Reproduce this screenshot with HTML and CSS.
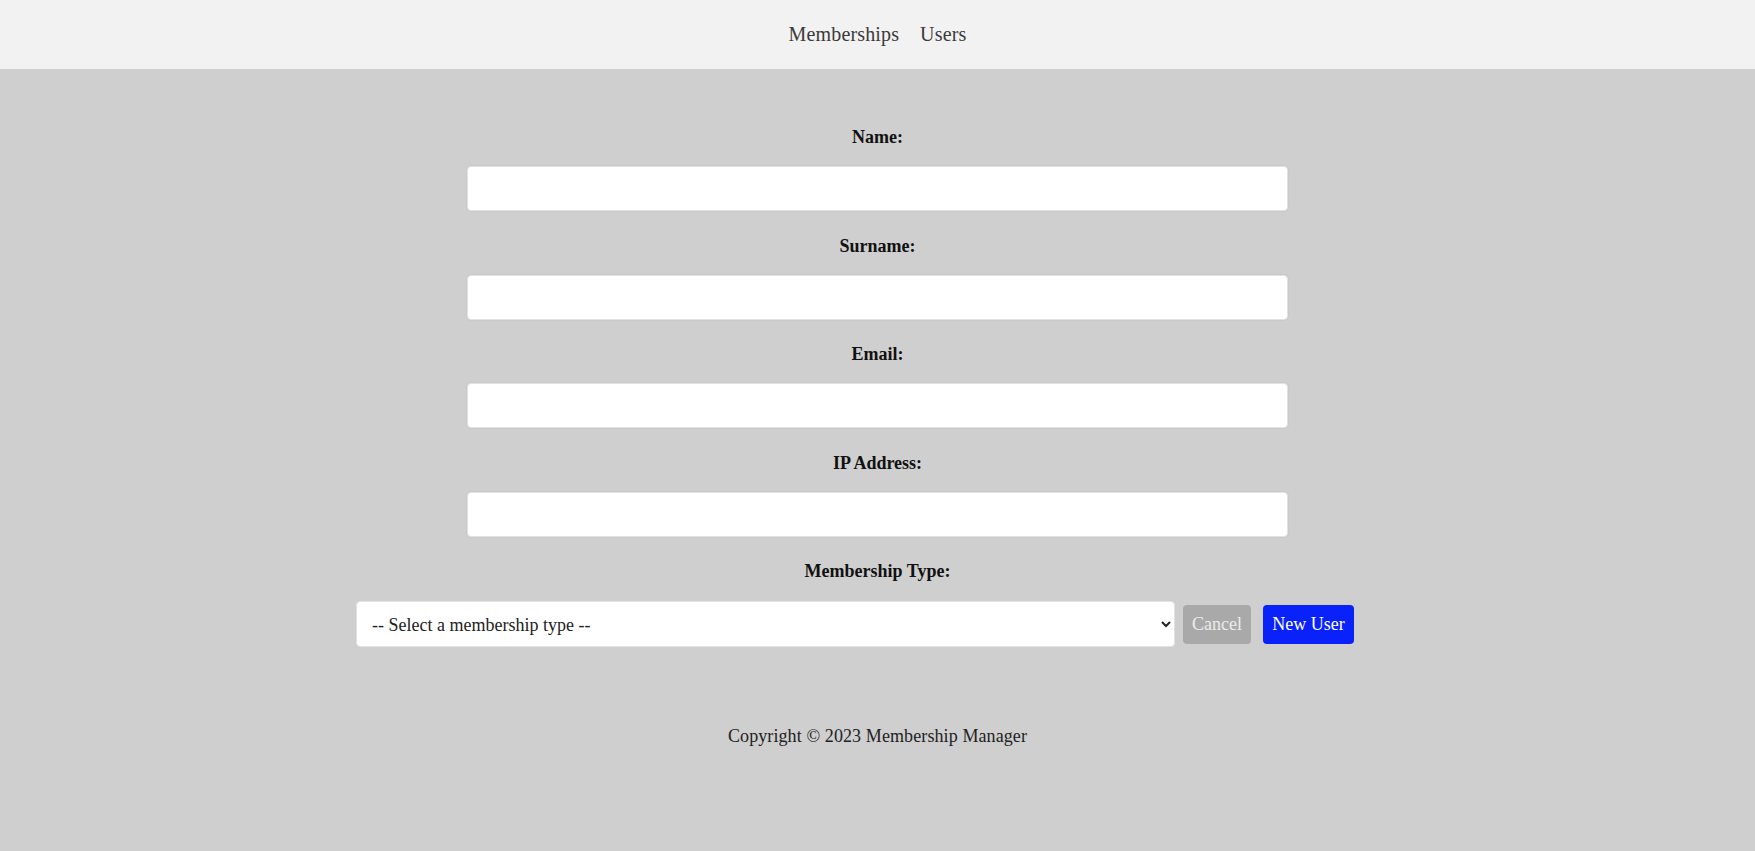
FILE: index.html
```html
<!DOCTYPE html>
<html lang="en">
<head>
<meta charset="utf-8">
<title>Membership Manager</title>
<link rel="stylesheet" href="styles.css">
</head>
<body>
<nav class="topnav">
  <a class="nav-link" href="#">Memberships</a>
  <a class="nav-link" href="#">Users</a>
</nav>
<main class="content">
  <form class="user-form">
    <label class="field-label" for="name">Name:</label>
    <input class="field-input" id="name" type="text">
    <label class="field-label" for="surname">Surname:</label>
    <input class="field-input" id="surname" type="text">
    <label class="field-label" for="email">Email:</label>
    <input class="field-input" id="email" type="text">
    <label class="field-label" for="ip">IP Address:</label>
    <input class="field-input" id="ip" type="text">
    <label class="field-label" for="type">Membership Type:</label>
    <div class="action-row">
      <select class="field-select" id="type">
        <option>-- Select a membership type --</option>
      </select>
      <button class="btn btn-cancel" type="button">Cancel</button>
      <button class="btn btn-primary" type="button">New User</button>
    </div>
  </form>
  <footer class="footer">Copyright © 2023 Membership Manager</footer>
</main>
</body>
</html>
```

FILE: styles.css
```css
html, body {
  margin: 0;
  padding: 0;
}
body {
  background: #cfcfcf;
  font-family: "Liberation Serif", "Times New Roman", serif;
  color: #111;
  min-height: 851px;
}
.topnav {
  height: 69px;
  background: #f2f2f2;
  display: flex;
  justify-content: center;
  align-items: center;
  gap: 21px;
}
.nav-link {
  font-size: 20px;
  color: #3a3a3a;
  text-decoration: none;
  line-height: 23px;
  letter-spacing: 0.15px;
}
.content {
  padding-top: 57px;
}
.user-form {
  display: flex;
  flex-direction: column;
  align-items: center;
}
.field-label {
  font-size: 18px;
  font-weight: bold;
  line-height: 23px;
  margin-bottom: 17px;
  color: #111;
}
.field-input {
  box-sizing: border-box;
  width: 821px;
  height: 45px;
  margin: 0 0 23.6px 0;
  background: #fff;
  border: 1px solid #e2e2e2;
  border-radius: 4px;
  box-shadow: 0 0 2px rgba(0, 0, 0, 0.08);
  font-family: inherit;
  font-size: 18px;
  padding: 0 14px;
}
.action-row {
  display: flex;
  align-items: center;
  padding-right: 45px;
  margin-top: 1px;
}
.field-select {
  box-sizing: border-box;
  width: 819px;
  height: 46px;
  background: #fff;
  border: 1px solid #e2e2e2;
  border-radius: 4px;
  font-family: inherit;
  font-size: 18px;
  color: #222;
  padding: 1px 10px 0 11px;
  margin-right: 8px;
}
.btn {
  box-sizing: border-box;
  height: 39px;
  border: none;
  border-radius: 4px;
  font-family: inherit;
  font-size: 18px;
  padding: 1px 8px 0 8px;
  color: #fff;
}
.btn-cancel {
  width: 68px;
  background: #a9a9a9;
  color: #ececec;
  margin-right: 12px;
}
.btn-primary {
  width: 91px;
  background: #0a22fa;
}
.footer {
  margin-top: 78px;
  text-align: center;
  font-size: 18px;
  line-height: 23px;
  color: #222;
  letter-spacing: 0.1px;
}
```
